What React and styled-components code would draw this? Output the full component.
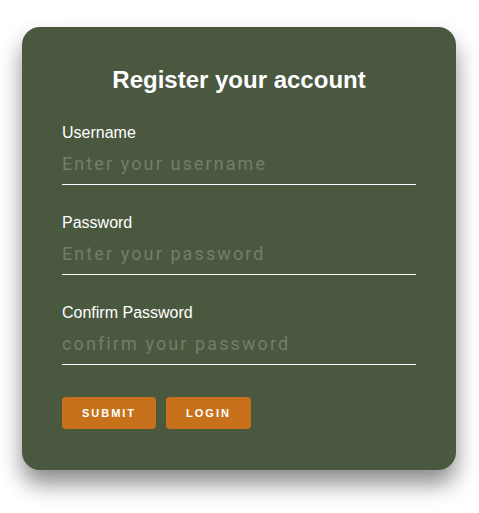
import React, { useState } from "react";
import styled, { createGlobalStyle } from "styled-components";

const GlobalStyle = createGlobalStyle`
  html, body {
    margin: 0;
    padding: 0;
    background: #ffffff;
  }
  body {
    font-family: "Liberation Sans", Arial, sans-serif;
  }
`;

const Page = styled.div`
  display: flex;
  align-items: flex-start;
  min-height: 100vh;
  box-sizing: border-box;
  padding: 27px 0 40px 22px;
`;

const Card = styled.form`
  width: 434px;
  box-sizing: border-box;
  padding: 39px 40px 41px;
  background-color: #4a5840;
  border-radius: 18px;
  box-shadow: 0 14px 22px rgba(0, 0, 0, 0.45);
  display: flex;
  flex-direction: column;
`;

const Title = styled.h2`
  margin: 0 0 30px;
  text-align: center;
  color: #ffffff;
  font-size: 24px;
  font-weight: bold;
`;

const Field = styled.div`
  display: flex;
  flex-direction: column;
  margin-bottom: 29px;
`;

const Label = styled.label`
  color: #ffffff;
  font-size: 16px;
  line-height: 18px;
`;

const Input = styled.input`
  height: 43px;
  box-sizing: border-box;
  padding: 0;
  background: transparent;
  border: none;
  border-bottom: 1px solid #ffffff;
  outline: none;
  color: #ffffff;
  font-family: Roboto, "Liberation Sans", sans-serif;
  font-size: 18px;
  letter-spacing: 2.1px;

  &::placeholder {
    color: #737e6b;
  }
`;

const Buttons = styled.div`
  display: flex;
  gap: 10px;
  margin-top: 3px;
`;

const Button = styled.button`
  height: 32px;
  width: ${(p) => p.$width}px;
  border: none;
  border-radius: 4px;
  background-color: #c8711b;
  color: #ffffff;
  font-family: "Liberation Sans", Arial, sans-serif;
  font-size: 11px;
  font-weight: bold;
  letter-spacing: 2px;
  text-transform: uppercase;
  cursor: pointer;
`;

function App() {
  const [form, setForm] = useState({ username: "", password: "", confirm: "" });
  const update = (field, value) => setForm({ ...form, [field]: value });

  return (
    <>
      <GlobalStyle />
      <Page>
        <Card onSubmit={(e) => e.preventDefault()}>
          <Title>Register your account</Title>
          <Field>
            <Label>Username</Label>
            <Input
              type="text"
              placeholder="Enter your username"
              value={form.username}
              onChange={(e) => update("username", e.target.value)}
            />
          </Field>
          <Field>
            <Label>Password</Label>
            <Input
              type="password"
              placeholder="Enter your password"
              value={form.password}
              onChange={(e) => update("password", e.target.value)}
            />
          </Field>
          <Field>
            <Label>Confirm Password</Label>
            <Input
              type="password"
              placeholder="confirm your password"
              value={form.confirm}
              onChange={(e) => update("confirm", e.target.value)}
            />
          </Field>
          <Buttons>
            <Button type="submit" $width={94}>Submit</Button>
            <Button type="button" $width={85}>Login</Button>
          </Buttons>
        </Card>
      </Page>
    </>
  );
}

export default App;
